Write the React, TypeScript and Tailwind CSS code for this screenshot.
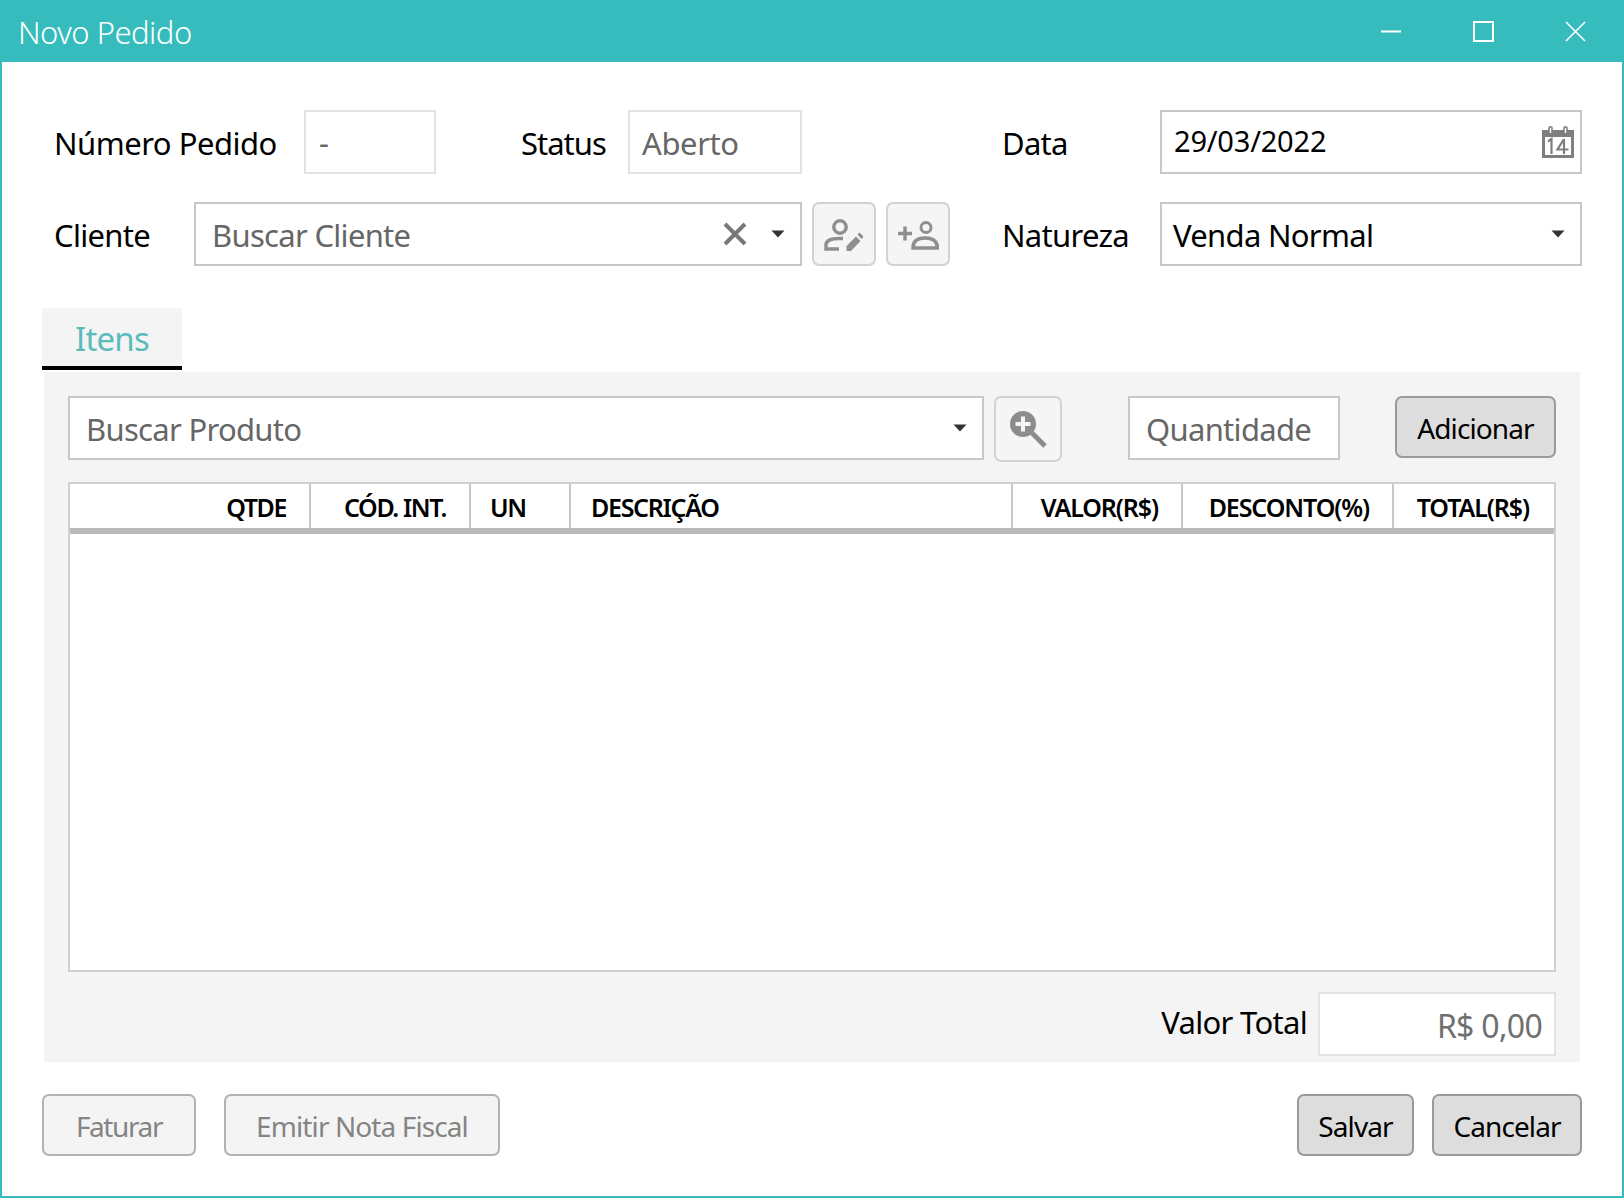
import { ReactNode } from "react";

const teal = "border-[#36bcbc]";

function Caret() {
  return (
    <svg width="14" height="8" viewBox="0 0 14 8" className="shrink-0">
      <path d="M0.5 0.5 H13.5 L7 7.5 Z" fill="#333333" />
    </svg>
  );
}

function Field({ className, children }: { className: string; children?: ReactNode }) {
  return <div className={`flex items-center bg-white border-2 shrink-0 ${className}`}>{children}</div>;
}

function IconButton({ className, children }: { className: string; children: ReactNode }) {
  return (
    <div className={`flex items-center justify-center shrink-0 rounded-[7px] border-2 border-[#d2d2d2] bg-[#f5f5f5] ${className}`}>
      {children}
    </div>
  );
}

function ActionButton({ className, label, disabled }: { className: string; label: string; disabled?: boolean }) {
  return (
    <div
      className={`flex items-center justify-center shrink-0 rounded-[7px] border-2 pt-[2px] text-[28px] tracking-[-0.9px] ${
        disabled ? "border-[#b0b2b4] bg-[#f4f4f4] text-[#848484]" : "border-[#9a9a9a] bg-[#dddddd] text-black"
      } ${className}`}
    >
      {label}
    </div>
  );
}

const columns = [
  { label: "QTDE", cls: "w-[241px] justify-end pr-[23px] tracking-[-1.4px]" },
  { label: "CÓD. INT.", cls: "w-[160px] justify-end pr-[23px] tracking-[-1.4px]" },
  { label: "UN", cls: "w-[100px] pl-[19px] tracking-[-1.4px]" },
  { label: "DESCRIÇÃO", cls: "w-[442px] pl-[20px] tracking-[-1.3px]" },
  { label: "VALOR(R$)", cls: "w-[170px] justify-end pr-[23px]" },
  { label: "DESCONTO(%)", cls: "w-[211px] justify-end pr-[23px]" },
  { label: "TOTAL(R$)", cls: "w-[160px] justify-end pr-[25px] !border-r-0" },
];

export default function App() {
  return (
    <div className={`w-[1624px] h-[1198px] overflow-hidden bg-white border-x-2 border-b-2 ${teal} font-['Noto_Sans',sans-serif] text-black`}>
      {/* title bar */}
      <div className="-mx-[2px] h-[62px] bg-[#36bcbc] flex items-center text-white">
        <span className="ml-[18px] pt-[2px] text-[31px] font-light tracking-[-0.5px]">Novo Pedido</span>
        <div className="ml-auto flex items-center">
          <svg width="20" height="20" viewBox="0 0 20 20" className="mr-[72px]" fill="none" stroke="#ffffff" strokeWidth="2">
            <path d="M0 10.5 H20" />
          </svg>
          <svg width="21" height="21" viewBox="0 0 21 21" className="mr-[71px]" fill="none" stroke="#ffffff" strokeWidth="2">
            <rect x="1" y="1" width="19" height="19" />
          </svg>
          <svg width="21" height="21" viewBox="0 0 21 21" className="mr-[38px]" fill="none" stroke="#ffffff" strokeWidth="1.6">
            <path d="M1 1 L20 20 M20 1 L1 20" />
          </svg>
        </div>
      </div>

      {/* first row */}
      <div className="mt-[48px] flex items-center h-[64px] text-[31px] tracking-[-0.7px]">
        <span className="ml-[52px] w-[250px] shrink-0 pt-[3px] tracking-[-0.5px]">Número Pedido</span>
        <Field className="w-[132px] h-[64px] border-[#e3e3e3] pl-[13px] text-[#666666]">-</Field>
        <span className="ml-[85px] w-[107px] shrink-0 pt-[3px] tracking-[-1px]">Status</span>
        <Field className="w-[174px] h-[64px] border-[#e3e3e3] pl-[12px] text-[#666666] pt-[3px] tracking-[-0.4px]">Aberto</Field>
        <span className="ml-[200px] w-[158px] shrink-0 pt-[3px]">Data</span>
        <Field className="w-[422px] h-[64px] border-[#c8c8c8] pl-[12px] pr-[6px] justify-between text-[29px] tracking-[-0.2px]">
          <span className="pb-[2px]">29/03/2022</span>
          <svg width="32" height="32" viewBox="0 0 32 32">
            <rect x="0" y="4" width="32" height="28" fill="#7f7f7f" />
            <rect x="3" y="11" width="26" height="18" fill="#ffffff" />
            <path d="M7 7 V2 Q7 0.8 8.5 0.8 Q10 0.8 10 2 V7 M22 7 V2 Q22 0.8 23.5 0.8 Q25 0.8 25 2 V7" fill="#ffffff" stroke="#7f7f7f" strokeWidth="1.6" />
            <path d="M6 15.5 L9.5 13 V28 M22 13 L15.5 23.5 H26.5 M22 13 V28" fill="none" stroke="#7f7f7f" strokeWidth="2.2" />
          </svg>
        </Field>
      </div>

      {/* second row */}
      <div className="mt-[28px] flex items-center h-[64px] text-[31px] tracking-[-0.7px]">
        <span className="ml-[52px] w-[140px] shrink-0 pt-[3px]">Cliente</span>
        <Field className="w-[608px] h-[64px] border-[#c8c8c8] pl-[16px] pr-[15px] text-[#666666]">
          <span className="pt-[3px]">Buscar Cliente</span>
          <svg width="24" height="24" viewBox="0 0 24 24" className="ml-auto mr-[24px]" fill="none" stroke="#787878" strokeWidth="4">
            <path d="M2 2 L22 22 M22 2 L2 22" />
          </svg>
          <Caret />
        </Field>
        <IconButton className="ml-[10px] w-[64px] h-[64px]">
          <svg width="40" height="32" viewBox="0 0 40 32" fill="none" stroke="#8f8f8f" strokeWidth="3.5" className="mt-[2px]">
            <circle cx="16" cy="8" r="6.2" />
            <path d="M19 19.5 H15 Q2 19.5 2 26 V30 H15" />
            <path d="M22.5 32 V27 L32 17.5 L36.5 22 L27 32 Z M33.5 15.5 L35.5 13.5 L39.5 17.5 L37.5 20 Z" fill="#8f8f8f" stroke="none" />
          </svg>
        </IconButton>
        <IconButton className="ml-[10px] w-[64px] h-[64px]">
          <svg width="41" height="29" viewBox="0 0 41 29" fill="none" stroke="#8f8f8f" strokeWidth="3.5" className="mt-[2px]">
            <circle cx="28" cy="6.5" r="5" strokeWidth="3" />
            <path d="M15 27 Q15 17 27 17 Q39.5 17 39.5 27 Z" />
            <path d="M0 12.5 H14 M7 5.5 V19.5" />
          </svg>
        </IconButton>
        <span className="ml-[52px] w-[158px] shrink-0 pt-[3px]">Natureza</span>
        <Field className="w-[422px] h-[64px] border-[#c8c8c8] pl-[11px] pr-[15px] justify-between">
          <span className="pt-[3px]">Venda Normal</span>
          <Caret />
        </Field>
      </div>

      {/* tab header */}
      <div className="mt-[42px] ml-[40px] w-[140px] h-[62px] bg-[#f4f4f4] border-b-4 border-black flex items-center justify-center pt-[4px] text-[33px] text-[#5cbcbc] tracking-[-0.8px]">
        Itens
      </div>

      {/* tab panel */}
      <div className="mt-[2px] ml-[42px] w-[1536px] h-[690px] bg-[#f4f4f4] pl-[24px] pt-[24px]">
        <div className="flex items-start h-[66px] text-[31px] tracking-[-0.7px]">
          <Field className="w-[916px] h-[64px] border-[#c8c8c8] pl-[16px] pr-[15px] justify-between text-[#666666]">
            <span className="pt-[3px]">Buscar Produto</span>
            <Caret />
          </Field>
          <IconButton className="ml-[10px] w-[68px] h-[66px]">
            <svg width="38" height="38" viewBox="0 0 38 38" className="-ml-[1px] -mt-[1px]">
              <circle cx="14" cy="14" r="13" fill="#8c8c8c" />
              <path d="M14 6.5 V21.5 M6.5 14 H21.5" stroke="#f5f5f5" strokeWidth="4" />
              <path d="M23 23 L36 36" stroke="#8c8c8c" strokeWidth="5" />
            </svg>
          </IconButton>
          <Field className="ml-[66px] w-[212px] h-[64px] border-[#c8c8c8] pl-[16px] text-[#666666]">
            <span className="pt-[3px]">Quantidade</span>
          </Field>
          <ActionButton className="ml-[55px] w-[161px] h-[62px]" label="Adicionar" />
        </div>

        {/* table */}
        <div className="mt-[20px] w-[1488px] h-[490px] bg-white border-2 border-[#d0d0d0]">
          <div className="flex h-[50px] border-b-[6px] border-[#b9b9b9] text-[25px] font-semibold tracking-[-1.1px]">
            {columns.map((col) => (
              <div key={col.label} className={`flex items-center shrink-0 border-r-2 border-[#c8c8c8] pt-[3px] ${col.cls}`}>
                {col.label}
              </div>
            ))}
          </div>
        </div>

        <div className="mt-[20px] w-[1488px] flex items-center justify-end text-[31px] tracking-[-0.7px]">
          <span className="mr-[11px] pb-[4px]">Valor Total</span>
          <Field className="w-[238px] h-[64px] border-[#e3e3e3] justify-end pr-[12px] text-[32px] text-[#707070]">
            <span className="pt-[3px]">R$ 0,00</span>
          </Field>
        </div>
      </div>

      {/* footer */}
      <div className="mt-[32px] ml-[40px] w-[1540px] flex h-[62px]">
        <ActionButton className="w-[154px] h-[62px] !tracking-[-1.4px]" label="Faturar" disabled />
        <ActionButton className="ml-[28px] w-[276px] h-[62px]" label="Emitir Nota Fiscal" disabled />
        <ActionButton className="ml-auto w-[117px] h-[62px]" label="Salvar" />
        <ActionButton className="ml-[18px] w-[150px] h-[62px]" label="Cancelar" />
      </div>
    </div>
  );
}
